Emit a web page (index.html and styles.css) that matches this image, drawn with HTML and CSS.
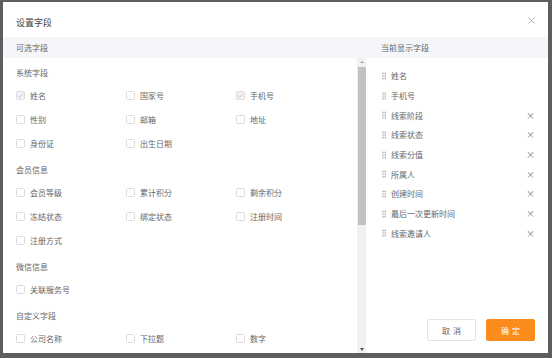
FILE: index.html
```html
<!DOCTYPE html>
<html lang="zh-CN">
<head>
    <meta charset="UTF-8">
    <meta name="viewport" content="width=device-width, initial-scale=1.0">
    <title>设置字段</title>
    <link rel="stylesheet" href="styles.css">
</head>
<body>
    <div class="modal">
        <div class="modal-header">
            <span class="modal-title">设置字段</span>
            <span class="modal-close">
                <svg width="7" height="7" viewBox="0 0 7 7"><path d="M0.5 0.5L6.5 6.5M6.5 0.5L0.5 6.5" stroke="#a6a6a6" stroke-width="0.9"/></svg>
            </span>
        </div>

        <div class="modal-body">
            <div class="pane pane-left">
                <div class="pane-title">可选字段</div>
                <div class="pane-scroll">
                    <div class="field-list">
                        <div class="group">
                            <div class="group-title">系统字段</div>
                            <div class="group-grid">
                                <label class="check"><span class="box checked"><svg width="7" height="7" viewBox="0 0 7 7"><path d="M1 3.6L2.8 5.3L6 1.6" fill="none" stroke="#bfbfbf" stroke-width="0.9"/></svg></span>姓名</label>
                                <label class="check"><span class="box"></span>国家号</label>
                                <label class="check"><span class="box checked"><svg width="7" height="7" viewBox="0 0 7 7"><path d="M1 3.6L2.8 5.3L6 1.6" fill="none" stroke="#bfbfbf" stroke-width="0.9"/></svg></span>手机号</label>
                                <label class="check"><span class="box"></span>性别</label>
                                <label class="check"><span class="box"></span>邮箱</label>
                                <label class="check"><span class="box"></span>地址</label>
                                <label class="check"><span class="box"></span>身份证</label>
                                <label class="check"><span class="box"></span>出生日期</label>
                            </div>
                        </div>
                        <div class="group">
                            <div class="group-title">会员信息</div>
                            <div class="group-grid">
                                <label class="check"><span class="box"></span>会员等级</label>
                                <label class="check"><span class="box"></span>累计积分</label>
                                <label class="check"><span class="box"></span>剩余积分</label>
                                <label class="check"><span class="box"></span>冻结状态</label>
                                <label class="check"><span class="box"></span>绑定状态</label>
                                <label class="check"><span class="box"></span>注册时间</label>
                                <label class="check"><span class="box"></span>注册方式</label>
                            </div>
                        </div>
                        <div class="group">
                            <div class="group-title">微信信息</div>
                            <div class="group-grid">
                                <label class="check"><span class="box"></span>关联服务号</label>
                            </div>
                        </div>
                        <div class="group">
                            <div class="group-title">自定义字段</div>
                            <div class="group-grid">
                                <label class="check"><span class="box"></span>公司名称</label>
                                <label class="check"><span class="box"></span>下拉题</label>
                                <label class="check"><span class="box"></span>数字</label>
                            </div>
                        </div>
                    </div>
                    <div class="scrollbar">
                        <span class="arrow arrow-up"></span>
                        <span class="thumb"></span>
                        <span class="track-rest"></span>
                        <span class="arrow arrow-down"></span>
                    </div>
                </div>
            </div>

            <div class="pane pane-right">
                <div class="pane-title">当前显示字段</div>
                <ul class="shown-list">
                    <li><span class="handle"></span>姓名</li>
                    <li><span class="handle"></span>手机号</li>
                    <li><span class="handle"></span>线索阶段<span class="remove">×</span></li>
                    <li><span class="handle"></span>线索状态<span class="remove">×</span></li>
                    <li><span class="handle"></span>线索分值<span class="remove">×</span></li>
                    <li><span class="handle"></span>所属人<span class="remove">×</span></li>
                    <li><span class="handle"></span>创建时间<span class="remove">×</span></li>
                    <li><span class="handle"></span>最后一次更新时间<span class="remove">×</span></li>
                    <li><span class="handle"></span>线索邀请人<span class="remove">×</span></li>
                </ul>
                <div class="modal-footer">
                    <button class="btn" type="button">取消</button>
                    <button class="btn btn-primary" type="button">确定</button>
                </div>
            </div>
        </div>
    </div>
</body>
</html>
```

FILE: styles.css
```css
html, body {
    height: 100%;
}
body {
    margin: 0;
    padding: 2px 4px 5px 3px;
    box-sizing: border-box;
    background: #5e5e5e;
    font-family: "Noto Sans CJK SC", "Noto Sans", sans-serif;
    font-size: 8px;
    color: #666;
}
.modal {
    height: 100%;
    background: #fff;
    display: flex;
    flex-direction: column;
}
.modal-header {
    height: 35px;
    box-sizing: border-box;
    padding: 12px 13px 0 13px;
    display: flex;
    justify-content: space-between;
}
.modal-title {
    font-size: 9px;
    line-height: 18px;
    color: #444;
}
.modal-close {
    display: flex;
    padding-top: 3px;
    margin-right: 0;
}
.modal-body {
    flex: 1;
    display: flex;
    min-height: 0;
}
.pane {
    display: flex;
    flex-direction: column;
}
.pane-title {
    height: 21px;
    line-height: 21px;
    background: #f5f6f9;
    color: #666;
    flex: none;
}
.pane-left {
    flex: 0 0 363px;
}
.pane-left .pane-title {
    padding-left: 13px;
}
.pane-scroll {
    flex: 1;
    display: flex;
    min-height: 0;
}
.field-list {
    flex: 1;
    overflow: hidden;
    padding: 5px 0 0 13px;
}
.group {
    margin-bottom: 5px;
}
.group-title {
    height: 20px;
    line-height: 20px;
    color: #666;
}
.group-grid {
    display: grid;
    grid-template-columns: repeat(3, 110px);
    grid-auto-rows: 24px;
}
.check {
    display: flex;
    align-items: center;
    gap: 5px;
    color: #666;
}
.box {
    width: 9px;
    height: 9px;
    box-sizing: border-box;
    border: 1px solid #dcdcdc;
    border-radius: 1.5px;
    background: #fff;
    display: flex;
    align-items: center;
    justify-content: center;
}
.box.checked {
    background: #f3f3f3;
}
.box svg {
    flex: none;
}
.scrollbar {
    flex: 0 0 9px;
    background: #f1f1f1;
    display: flex;
    flex-direction: column;
    align-items: center;
}
.arrow {
    height: 9px;
    width: 9px;
    position: relative;
    flex: none;
}
.arrow::after {
    content: "";
    position: absolute;
    left: 2.5px;
    top: 3px;
    border-left: 2px solid transparent;
    border-right: 2px solid transparent;
}
.arrow-up::after {
    border-bottom: 2px solid #a3a3a3;
}
.arrow-down::after {
    top: 3.5px;
    border-top: 3px solid #505050;
}
.thumb {
    width: 8px;
    height: 158px;
    background: #c1c1c1;
    flex: none;
}
.track-rest {
    flex: 1;
}
.pane-right {
    flex: 1;
}
.pane-right .pane-title {
    padding-left: 15px;
}
.shown-list {
    list-style: none;
    margin: 0;
    padding: 8px 13px 0 16px;
}
.shown-list li {
    height: 19.7px;
    display: flex;
    align-items: center;
    color: #666;
}
.handle {
    width: 4px;
    height: 8px;
    margin-right: 5px;
    background-image: radial-gradient(circle, #b5b5b5 0.8px, transparent 1px);
    background-size: 2.5px 2.7px;
    background-position: -0.3px 0;
}
.remove {
    margin-left: auto;
    font-size: 9px;
    color: #777;
}
.modal-footer {
    margin-top: auto;
    display: flex;
    justify-content: flex-end;
    gap: 10px;
    padding: 0 13px 12px 0;
}
.btn {
    width: 49px;
    height: 22px;
    padding: 0;
    border: 1px solid #e3e3e3;
    border-radius: 2px;
    background: #fff;
    color: #666;
    font-family: inherit;
    font-size: 8px;
    letter-spacing: 3px;
    text-indent: 3px;
    cursor: pointer;
}
.btn-primary {
    background: #fb8c1b;
    border-color: #fb8c1b;
    color: #fff;
}
```
